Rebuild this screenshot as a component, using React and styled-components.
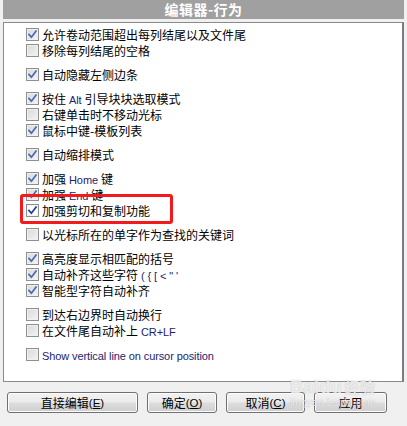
import React from "react";
import styled, { createGlobalStyle } from "styled-components";

const Global = createGlobalStyle`
  html, body { margin: 0; padding: 0; background: #f0f0f0; }
  body { width: 407px; height: 426px; overflow: hidden; font-family: "Noto Sans CJK SC", "Noto Sans", sans-serif; }
`;

const Page = styled.div`
  position: relative;
  width: 407px;
  height: 426px;
  padding: 0 3px;
  box-sizing: border-box;
  display: flex;
  flex-direction: column;
`;

const Header = styled.div`
  height: 19px;
  background: #a0a0a0;
  color: #fff;
  font-weight: 700;
  font-size: 14px;
  line-height: 19px;
  text-align: center;
  letter-spacing: 0.5px;
`;

const Panel = styled.div`
  margin-top: 3px;
  height: 360px;
  box-sizing: border-box;
  background: #fff;
  border: 1px solid #8a8a8a;
  border-right: 2px solid #7c7c84;
  padding: 3px 0 0 22px;
  display: flex;
  flex-direction: column;
  gap: 8px;
`;

const Group = styled.div`
  display: flex;
  flex-direction: column;
`;

const Row = styled.div`
  position: relative;
  height: 16px;
  display: flex;
  align-items: center;
  gap: 3px;
  font-size: 12px;
  color: #000;
  white-space: nowrap;
`;

const Box = styled.span`
  width: 13px;
  height: 13px;
  box-sizing: border-box;
  border: 1px solid #8e8f8f;
  background: ${p => (p.$focus ? "#fff" : "linear-gradient(135deg, #d9d9d9 0%, #f4f4f4 100%)")};
  box-shadow: inset 0 0 0 1px ${p => (p.$focus ? "#f4f4f4" : "#f0f0f0")};
  display: flex;
  align-items: center;
  justify-content: center;
  flex: none;
`;

const Latin = styled.span`
  font-family: "Liberation Sans", Arial, sans-serif;
  font-size: 11px;
  letter-spacing: -0.1px;
  color: #1c2470;
  margin: 0 ${p => (p.$tight ? 0 : 3)}px;
`;

const Highlight = styled.div`
  position: absolute;
  left: -6px;
  top: -8px;
  width: 153px;
  height: 30px;
  box-sizing: border-box;
  border: 3px solid #f21a1a;
  border-radius: 3px;
  pointer-events: none;
`;

const Buttons = styled.div`
  display: flex;
  gap: 9px;
  padding: 10px 0 0 4px;
`;

const Button = styled.div`
  width: ${p => p.$w}px;
  height: 21px;
  box-sizing: border-box;
  border: 1px solid #707070;
  border-radius: 3px;
  background: linear-gradient(#f2f2f2 0%, #ebebeb 48%, #dddddd 52%, #cfcfcf 100%);
  box-shadow: inset 0 0 0 1px #fcfcfc;
  display: flex;
  align-items: center;
  justify-content: center;
  font-size: 12px;
  color: #000;
`;

const Key = styled.span`
  font-family: "Liberation Sans", Arial, sans-serif;
  font-size: 11.5px;
  & u { text-decoration: underline; text-underline-offset: 1px; }
`;

const Watermark = styled.div`
  position: absolute;
  left: 290px;
  top: 377px;
  display: flex;
  flex-direction: column;
  align-items: center;
  color: rgba(255, 255, 255, 0.75);
  text-shadow: 0 0 1px rgba(120, 120, 120, 0.55);
  pointer-events: none;
  font-family: "Liberation Sans", Arial, sans-serif;
`;

const MarkTop = styled.div`
  font-size: 18px;
  font-weight: 700;
  line-height: 20px;
  letter-spacing: 0.5px;
  & span { font-family: "Noto Sans CJK SC", sans-serif; font-size: 15px; margin-left: 2px; }
`;

const MarkSub = styled.div`
  font-size: 10px;
  line-height: 12px;
  letter-spacing: 0.3px;
`;

const Check = ({ on, focus }) => (
  <Box $focus={focus}>
    {on && (
      <svg width="9" height="9" viewBox="0 0 9 9">
        <path
          d="M1 4.6 L3.4 7.2 L8 1.2"
          fill="none"
          stroke={focus ? "#1f3f95" : "#4a6ab8"}
          strokeWidth="1.8"
          strokeLinecap="square"
        />
      </svg>
    )}
  </Box>
);

const Item = ({ on, focus, children, mark }) => (
  <Row>
    <Check on={on} focus={focus} />
    <span>{children}</span>
    {mark && <Highlight />}
  </Row>
);

const BRACKETS = "( { [ < \" '";

export default function App() {
  return (
    <>
      <Global />
      <Page>
        <Header>编辑器-行为</Header>
        <Panel>
          <Group>
            <Item on>允许卷动范围超出每列结尾以及文件尾</Item>
            <Item>移除每列结尾的空格</Item>
          </Group>
          <Group>
            <Item on>自动隐藏左侧边条</Item>
          </Group>
          <Group>
            <Item on>按住<Latin>Alt</Latin>引导块块选取模式</Item>
            <Item>右键单击时不移动光标</Item>
            <Item on>鼠标中键-模板列表</Item>
          </Group>
          <Group>
            <Item on>自动缩排模式</Item>
          </Group>
          <Group>
            <Item on>加强<Latin>Home</Latin>键</Item>
            <Item on>加强<Latin>End</Latin>键</Item>
            <Item on focus mark>加强剪切和复制功能</Item>
          </Group>
          <Group>
            <Item>以光标所在的单字作为查找的关键词</Item>
          </Group>
          <Group>
            <Item on>高亮度显示相匹配的括号</Item>
            <Item on>自动补齐这些字符<Latin>{BRACKETS}</Latin></Item>
            <Item on>智能型字符自动补齐</Item>
          </Group>
          <Group>
            <Item>到达右边界时自动换行</Item>
            <Item>在文件尾自动补上<Latin>CR+LF</Latin></Item>
          </Group>
          <Group>
            <Item><Latin $tight>Show vertical line on cursor position</Latin></Item>
          </Group>
        </Panel>
        <Buttons>
          <Button $w={131}>直接编辑<Key>(<u>E</u>)</Key></Button>
          <Button $w={70}>确定<Key>(<u>O</u>)</Key></Button>
          <Button $w={79}>取消<Key>(<u>C</u>)</Key></Button>
          <Button $w={73}>应用</Button>
        </Buttons>
        <Watermark>
          <MarkTop>Baidu<span>经验</span></MarkTop>
          <MarkSub>jingyan.baidu.com</MarkSub>
        </Watermark>
      </Page>
    </>
  );
}
